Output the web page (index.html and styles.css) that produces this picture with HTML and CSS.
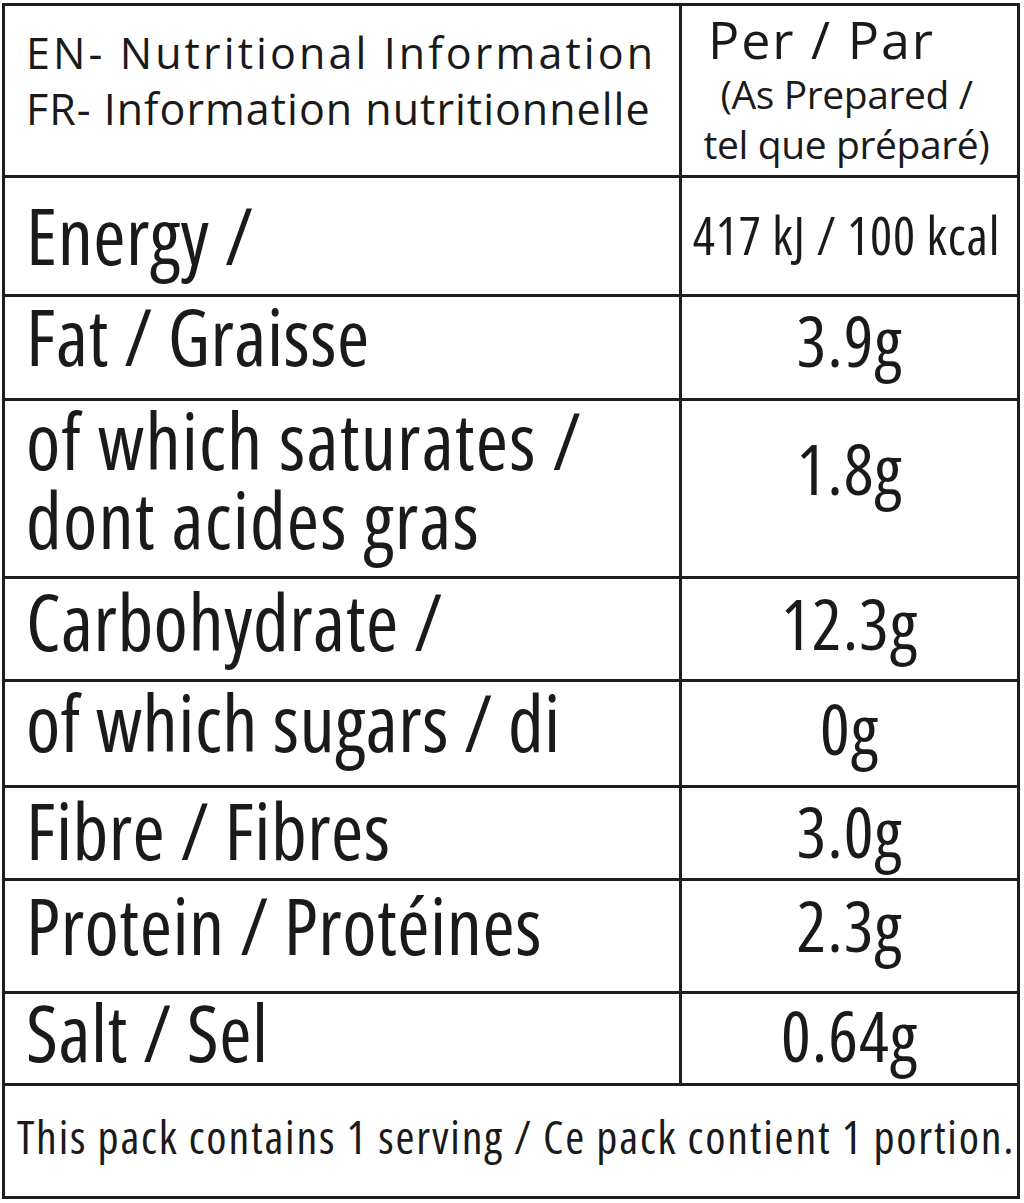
FILE: index.html
```html
<!DOCTYPE html>
<html lang="en">
<head>
<meta charset="utf-8">
<title>Nutritional Information</title>
<link rel="stylesheet" href="styles.css">
</head>
<body>
<div class="panel">
  <div class="row r-head">
    <div class="name head-name">
      <div class="head-en">EN- Nutritional Information</div>
      <div class="head-fr">FR- Information nutritionnelle</div>
    </div>
    <div class="val head-val">
      <div class="per">Per / Par</div>
      <div class="prep">(As Prepared /</div>
      <div class="prep">tel que préparé)</div>
    </div>
  </div>
  <div class="row r-energy">
    <div class="name">Energy /</div>
    <div class="val energy-val">417 kJ / 100 kcal</div>
  </div>
  <div class="row r-fat">
    <div class="name">Fat / Graisse</div>
    <div class="val">3.9g</div>
  </div>
  <div class="row r-sat">
    <div class="name two-line">of which saturates /<br>dont acides gras</div>
    <div class="val">1.8g</div>
  </div>
  <div class="row r-carb">
    <div class="name">Carbohydrate /</div>
    <div class="val">12.3g</div>
  </div>
  <div class="row r-sugar">
    <div class="name">of which sugars / di</div>
    <div class="val">0g</div>
  </div>
  <div class="row r-fibre">
    <div class="name">Fibre / Fibres</div>
    <div class="val">3.0g</div>
  </div>
  <div class="row r-protein">
    <div class="name">Protein / Protéines</div>
    <div class="val">2.3g</div>
  </div>
  <div class="row r-salt">
    <div class="name">Salt / Sel</div>
    <div class="val">0.64g</div>
  </div>
  <div class="footer">This pack contains 1 serving / Ce pack contient 1 portion.</div>
</div>
</body>
</html>
```
FILE: styles.css
```css
html, body {
  margin: 0;
  padding: 0;
  background: #ffffff;
}

body {
  font-family: "Open Sans", "Noto Sans", "Liberation Sans", sans-serif;
  font-stretch: 75%;
  color: #1a1a1a;
}

.panel {
  box-sizing: border-box;
  width: 1018px;
  height: 1196px;
  margin: 3px 0 0 2px;
  border: 3px solid #1e1e1e;
  display: flex;
  flex-direction: column;
}

.row {
  box-sizing: border-box;
  display: grid;
  grid-template-columns: 677px 1fr;
  height: var(--h);
  border-bottom: 3px solid #1e1e1e;
  flex: none;
}

.name {
  box-sizing: border-box;
  border-right: 3px solid #1e1e1e;
  padding: var(--lp) 0 0 21px;
  font-size: 78px;
  line-height: 60px;
  letter-spacing: 0.5px;
  white-space: nowrap;
}

.two-line {
  line-height: 79px;
  letter-spacing: 1.2px;
}

.val {
  box-sizing: border-box;
  padding-top: var(--vp);
  text-align: center;
  font-size: 70px;
  line-height: 60px;
  letter-spacing: 1px;
  white-space: nowrap;
}

.energy-val {
  font-size: 52px;
  letter-spacing: 0.9px;
  padding-right: 6px;
}

/* header */
.r-head { --h: 172px; --lp: 19px; --vp: 3px; }
.head-name {
  font-size: 43px;
  line-height: 56px;
  font-stretch: 100%;
  padding-left: 21px;
}
.head-en {
  letter-spacing: 3.1px;
}
.head-fr {
  letter-spacing: 1px;
}
.per {
  font-size: 52px;
  line-height: 60px;
  font-stretch: 100%;
  letter-spacing: 2px;
  padding-right: 56px;
}
.prep {
  font-size: 39px;
  line-height: 50px;
  font-stretch: 100%;
  letter-spacing: -0.4px;
  padding-right: 6px;
}

.r-energy  { --h: 119px; --lp: 27px; --vp: 27px; }
.r-fat     { --h: 104px; --lp: 9px;  --vp: 13px; }
.r-sat     { --h: 178px; --lp: 0px;  --vp: 37px; }
.r-carb    { --h: 103px; --lp: 12px; --vp: 14px; }
.r-sugar   { --h: 106px; --lp: 10px; --vp: 16px; }
.r-fibre   { --h: 93px;  --lp: 12px; --vp: 13px; }
.r-protein { --h: 113px; --lp: 14px; --vp: 14px; }
.r-salt    { --h: 92px;  --lp: 8px;  --vp: 11px; }

.footer {
  flex: 1;
  box-sizing: border-box;
  padding: 20px 0 0 12px;
  font-size: 46px;
  line-height: 60px;
  letter-spacing: 1.8px;
  white-space: nowrap;
}
```
